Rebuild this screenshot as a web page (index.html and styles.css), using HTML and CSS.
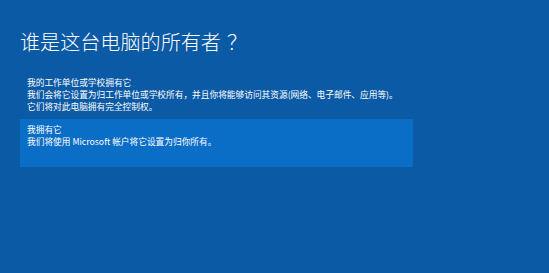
FILE: index.html
```html
<!DOCTYPE html>
<html lang="zh-CN">
<head>
<meta charset="utf-8">
<title>谁是这台电脑的所有者？</title>
<link rel="stylesheet" href="styles.css">
</head>
<body>
<main class="page">
  <h1 class="title">谁是这台电脑的所有者<span class="qmark">？</span></h1>
  <div class="options">
    <div class="option">
      <div class="option-name">我的工作单位或学校拥有它</div>
      <div class="option-desc">我们会将它设置为归工作单位或学校所有，并且你将能够访问其资源(网络、电子邮件、应用等)。<br>它们将对此电脑拥有完全控制权。</div>
    </div>
    <div class="option selected">
      <div class="option-name">我拥有它</div>
      <div class="option-desc">我们将使用 Microsoft 帐户将它设置为归你所有。</div>
    </div>
  </div>
</main>
</body>
</html>
```
FILE: styles.css
```css
html, body {
  margin: 0;
  padding: 0;
  background: #0b5aa5;
  height: 100%;
}
body {
  font-family: "Noto Sans CJK SC", "Noto Sans", "DejaVu Sans", sans-serif;
  color: #ffffff;
  overflow: hidden;
}
.page {
  padding: 30px 0 0 20px;
  display: flex;
  flex-direction: column;
}
.title {
  margin: 0;
  font-size: 20.1px;
  line-height: 24px;
  font-weight: 300;
}
.qmark {
  margin-left: 6px;
}
.options {
  margin-top: 23px;
  display: flex;
  flex-direction: column;
  gap: 7px;
  width: 393px;
}
.option {
  padding: 0 7px;
  font-size: 8.7px;
  line-height: 11.8px;
}
.option.selected {
  background: #0a6dc6;
  padding: 5px 7px 19px;
}
```
